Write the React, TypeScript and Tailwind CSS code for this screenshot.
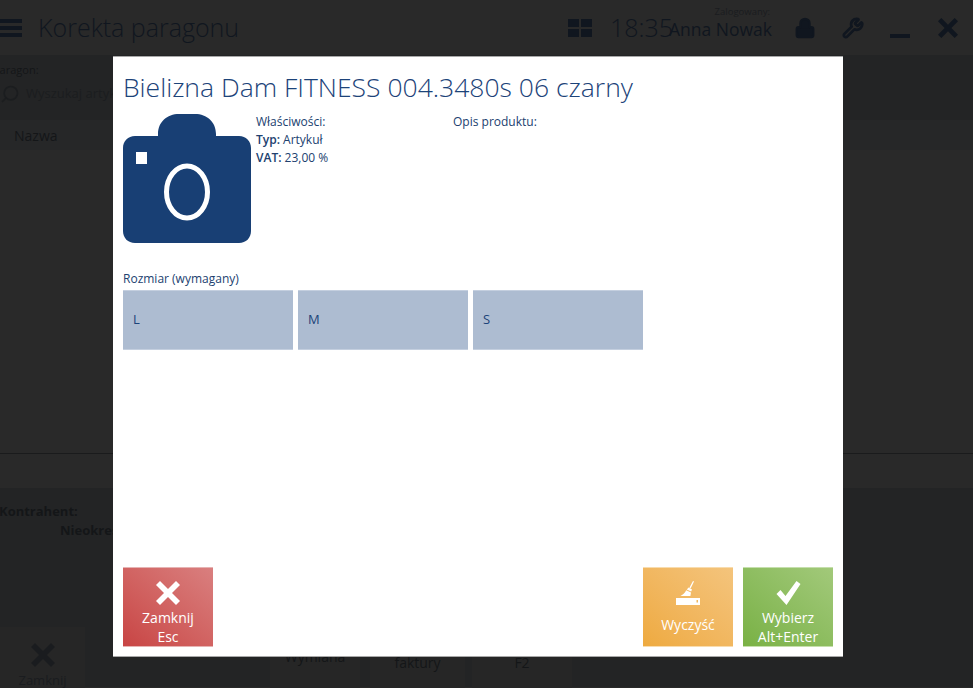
import { Lock, Search, Wrench } from "lucide-react";

const font = { fontFamily: '"Open Sans", "Noto Sans", sans-serif' };

const CrossIcon = ({ className }: { className?: string }) => (
  <svg viewBox="0 0 24 24" className={className} fill="currentColor">
    <path d="M4 0 12 8 20 0 24 4 16 12 24 20 20 24 12 16 4 24 0 20 8 12 0 4Z" />
  </svg>
);

const CameraIcon = () => (
  <svg viewBox="0 0 128 129" className="w-[128px] h-[129px] shrink-0">
    <path
      fill="#183f74"
      d="M35 22V20C35 8 44 0 56 0H72C84 0 93 8 93 20V22H116C123 22 128 27 128 34V117C128 124 123 129 116 129H12C5 129 0 124 0 117V34C0 27 5 22 12 22Z"
    />
    <rect x="13" y="38" width="11" height="12" fill="#fff" />
    <ellipse cx="64" cy="78" rx="20.5" ry="26" fill="none" stroke="#fff" strokeWidth="5" />
  </svg>
);

const BroomIcon = () => (
  <svg viewBox="0 0 24 24" className="w-[24px] h-[24px]" fill="#fff">
    <path d="M17 0 18 .6 14.6 7.4 13.4 6.8Z" />
    <path d="M12.6 6.6 16 8.4 15.2 10.4 10.8 8.4Z" />
    <path d="M10.2 9.2 15 11.4 14.4 15 4.4 15 C7.4 13.4 9 11.6 10.2 9.2Z" />
    <path d="M0 17H24V24H0Z" />
    <rect x="20.5" y="19" width="1.5" height="2.5" fill="#f0b860" />
  </svg>
);

const ActionButton = ({
  gradient,
  edge,
  icon,
  lines,
}: {
  gradient: string;
  edge: string;
  icon: React.ReactNode;
  lines: string[];
}) => (
  <button className={`w-[90px] h-[80px] flex flex-col items-center border-y ${edge} ${gradient} text-white text-[14px] leading-[19px]`}>
    <div className="h-[47px] pt-[13px] flex justify-center">{icon}</div>
    {lines.map((l) => (
      <span key={l}>{l}</span>
    ))}
  </button>
);

const BackgroundTile = ({ className, lines }: { className: string; lines: string[] }) => (
  <div className={`flex flex-col items-center bg-[#262626] text-[14px] leading-[24px] text-[#141618] ${className}`}>
    {lines.map((l) => (
      <span key={l}>{l}</span>
    ))}
  </div>
);

export default function App() {
  return (
    <div className="relative w-[973px] h-[688px] overflow-hidden bg-[#292929] text-[#141618]" style={font}>
      {/* page behind the modal */}
      <header className="h-[55px] flex items-center text-[#10161f]">
        <div className="w-[22px] h-[18px] flex flex-col justify-between">
          <div className="h-[4px] bg-[#10161f]" />
          <div className="h-[4px] bg-[#10161f]" />
          <div className="h-[4px] bg-[#10161f]" />
        </div>
        <h1 className="ml-[16px] text-[25px] font-light leading-none">Korekta paragonu</h1>
        <div className="ml-auto flex items-center">
          <div className="grid grid-cols-2 gap-[2px] w-[24px] h-[18px]">
            <div className="bg-[#10161f]" />
            <div className="bg-[#10161f]" />
            <div className="bg-[#10161f]" />
            <div className="bg-[#10161f]" />
          </div>
          <span className="ml-[18px] w-[59px] text-[25px] font-light leading-none">18:35</span>
          <div className="w-[103px] flex flex-col items-end">
            <span className="text-[9.5px] leading-[11px] mr-[2px] -mt-[8px] text-[#1a1c1f]">Zalogowany:</span>
            <span className="text-[17.5px] leading-[24px] whitespace-nowrap">Anna Nowak</span>
          </div>
          <Lock className="ml-[22px] w-[22px] h-[22px]" fill="#10161f" strokeWidth={2.5} />
          <Wrench className="ml-[26px] w-[22px] h-[22px]" strokeWidth={3} />
          <div className="ml-[26px] mt-[16px] w-[20px] h-[4px] bg-[#10161f]" />
          <CrossIcon className="ml-[28px] mr-[15px] w-[20px] h-[20px]" />
        </div>
      </header>

      <section className="h-[65px] bg-[#232425] pt-[7px] relative">
        <p className="text-[11px] leading-[16px] -ml-[7px]">Paragon:</p>
        <div className="flex items-center mt-[6px] text-[#1b1d1f]">
          <Search className="w-[20px] h-[20px] -scale-x-100" />
          <span className="ml-[6px] text-[13px]">Wyszukaj artykuł</span>
        </div>
      </section>

      <div className="h-[30px] bg-[#262728] pl-[14px] flex items-center text-[14px]">Nazwa</div>

      <div className="h-[304px] border-b border-[#1a1b1c]" />
      <div className="h-[34px]" />

      <section className="h-[199px] bg-[#232425] relative">
        <p className="pt-[14px] -ml-[1px] text-[13px] font-bold leading-[18px]">Kontrahent:</p>
        <p className="pt-[1px] pl-[60px] text-[13px] font-bold leading-[18px] whitespace-nowrap">Nieokreślony</p>
        <div className="flex items-start mt-[88px]">
          <div className="w-[85px] h-[66px] bg-[#262626] flex flex-col items-center pt-[16px] text-[#1a1c1f]">
            <CrossIcon className="w-[24px] h-[24px]" />
            <span className="text-[13px] mt-[4px]">Zamknij</span>
          </div>
          <BackgroundTile className="ml-[185px] w-[90px] h-[66px] pt-[18px]" lines={["Wymiana"]} />
          <BackgroundTile className="ml-[10px] w-[95px] h-[66px]" lines={["Korekta", "faktury"]} />
          <BackgroundTile className="ml-[7px] w-[100px] h-[66px]" lines={["Zatwierdź", "F2"]} />
        </div>
      </section>

      {/* modal */}
      <div className="absolute left-[113px] top-[56px] w-[730px] h-[601px] bg-white border-y border-[#a8a8a8] px-[10px] flex flex-col text-[#21416f]">
        <h2 className="mt-[11px] text-[26.5px] font-light leading-[38px] whitespace-nowrap text-[#1c4379]">
          Bielizna Dam FITNESS 004.3480s 06 czarny
        </h2>
        <div className="flex mt-[8px]">
          <CameraIcon />
          <div className="ml-[5px] w-[197px] -mt-[1px] text-[12px] leading-[18px]">
            <p>Właściwości:</p>
            <p>
              <b className="font-semibold">Typ:</b> Artykuł
            </p>
            <p>
              <b className="font-semibold">VAT:</b> 23,00 %
            </p>
          </div>
          <p className="-mt-[1px] text-[12px] leading-[18px]">Opis produktu:</p>
        </div>
        <p className="mt-[27px] text-[12px] leading-[18px]">Rozmiar (wymagany)</p>
        <div className="flex gap-[5px] mt-[2px]">
          {["L", "M", "S"].map((s) => (
            <div
              key={s}
              className="w-[170px] h-[60px] bg-[#adbcd1] border-y border-[#c4cfdf] pl-[10px] flex items-center text-[13px] text-[#1c4379]"
            >
              {s}
            </div>
          ))}
        </div>
        <div className="mt-auto mb-[9px] flex">
          <ActionButton
            gradient="bg-gradient-to-tr from-[#c84444] to-[#d97f7f]"
            edge="border-[#e6b3b3]"
            icon={<CrossIcon className="w-[24px] h-[24px]" />}
            lines={["Zamknij", "Esc"]}
          />
          <div className="ml-auto flex gap-[10px]">
            <ActionButton
              gradient="bg-gradient-to-tr from-[#eeaa3f] to-[#f4c47c]"
              edge="border-[#f8dcae]"
              icon={<BroomIcon />}
              lines={["Wyczyść"]}
            />
            <ActionButton
              gradient="bg-gradient-to-tr from-[#79b144] to-[#a2c97a]"
              edge="border-[#c5dfac]"
              icon={
                <svg viewBox="0 0 24 24" className="w-[25px] h-[24px]" fill="#fff">
                  <path d="M0 13 4 9 9 15 20 0 24 3 10 24Z" />
                </svg>
              }
              lines={["Wybierz", "Alt+Enter"]}
            />
          </div>
        </div>
      </div>
    </div>
  );
}
